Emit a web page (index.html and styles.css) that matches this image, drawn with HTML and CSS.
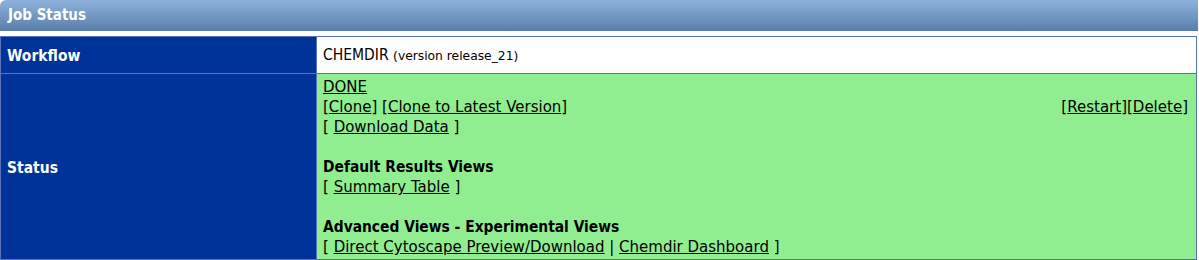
FILE: index.html
```html
<!DOCTYPE html>
<html lang="en">
<head>
  <meta charset="UTF-8" />
  <title>Job Status</title>
  <link rel="stylesheet" href="styles.css">
</head>
<body>
  <div class="panel-head">Job Status</div>

  <table class="job-table">
    <tr class="row-workflow">
      <th>Workflow</th>
      <td><span class="wf-name">CHEMDIR</span> <small>(version release_21)</small></td>
    </tr>
    <tr class="row-status">
      <th>Status</th>
      <td>
        <a href="#">DONE</a><br />
        <div class="actions">
          <span>[<a href="#">Clone</a>] [<a href="#">Clone to Latest Version</a>]</span>
          <span>[<a href="#">Restart</a>][<a href="#">Delete</a>]</span>
        </div>
        [ <a href="#">Download Data</a> ]<br />
        <br />
        <strong>Default Results Views</strong><br />
        [ <a href="#">Summary Table</a> ]<br />
        <br />
        <strong>Advanced Views - Experimental Views</strong><br />
        [ <a href="#">Direct Cytoscape Preview/Download</a> | <a href="#">Chemdir Dashboard</a> ]
      </td>
    </tr>
  </table>
</body>
</html>
```

FILE: styles.css
```css
* {
  margin: 0;
  padding: 0;
  box-sizing: border-box;
}

body {
  font-family: 'DejaVu Sans', sans-serif;
  font-size: 14px;
  color: #000;
  background: #fff;
  width: 1198px;
}

.panel-head {
  height: 31px;
  padding: 6px 8px;
  color: #fff;
  font-family: 'DejaVu Sans Condensed', 'DejaVu Sans', sans-serif;
  font-weight: bold;
  font-size: 15px;
  border-top-left-radius: 6px;
  background: linear-gradient(to bottom, #8db3dd, #5a7eab);
}

.job-table {
  width: 1197px;
  margin-top: 5px;
  border-collapse: collapse;
  border: 1px solid #5873b5;
}

.job-table th,
.job-table td {
  border: 1px solid #5873b5;
  text-align: left;
}

.job-table th {
  width: 316px;
  background: #003399;
  color: #fff;
  font-family: 'DejaVu Sans Condensed', 'DejaVu Sans', sans-serif;
  font-size: 15.5px;
  padding: 2px 6px 0;
}

.job-table td {
  padding: 1px 8px 1px 6px;
  line-height: 20px;
}

.row-workflow {
  height: 37px;
}

.row-workflow td {
  background: #fff;
  padding-top: 2px;
}

.wf-name {
  font-family: 'DejaVu Sans Condensed', 'DejaVu Sans', sans-serif;
  font-size: 15.5px;
}

.row-workflow small {
  font-size: 12.3px;
}

.row-status td {
  background: #90ee90;
  font-size: 15px;
  padding-top: 3px;
  padding-bottom: 2px;
}

.row-status strong {
  font-family: 'DejaVu Sans Condensed', 'DejaVu Sans', sans-serif;
  font-size: 15.4px;
}

.job-table a {
  color: #000;
}

.actions {
  display: flex;
  justify-content: space-between;
}
```
